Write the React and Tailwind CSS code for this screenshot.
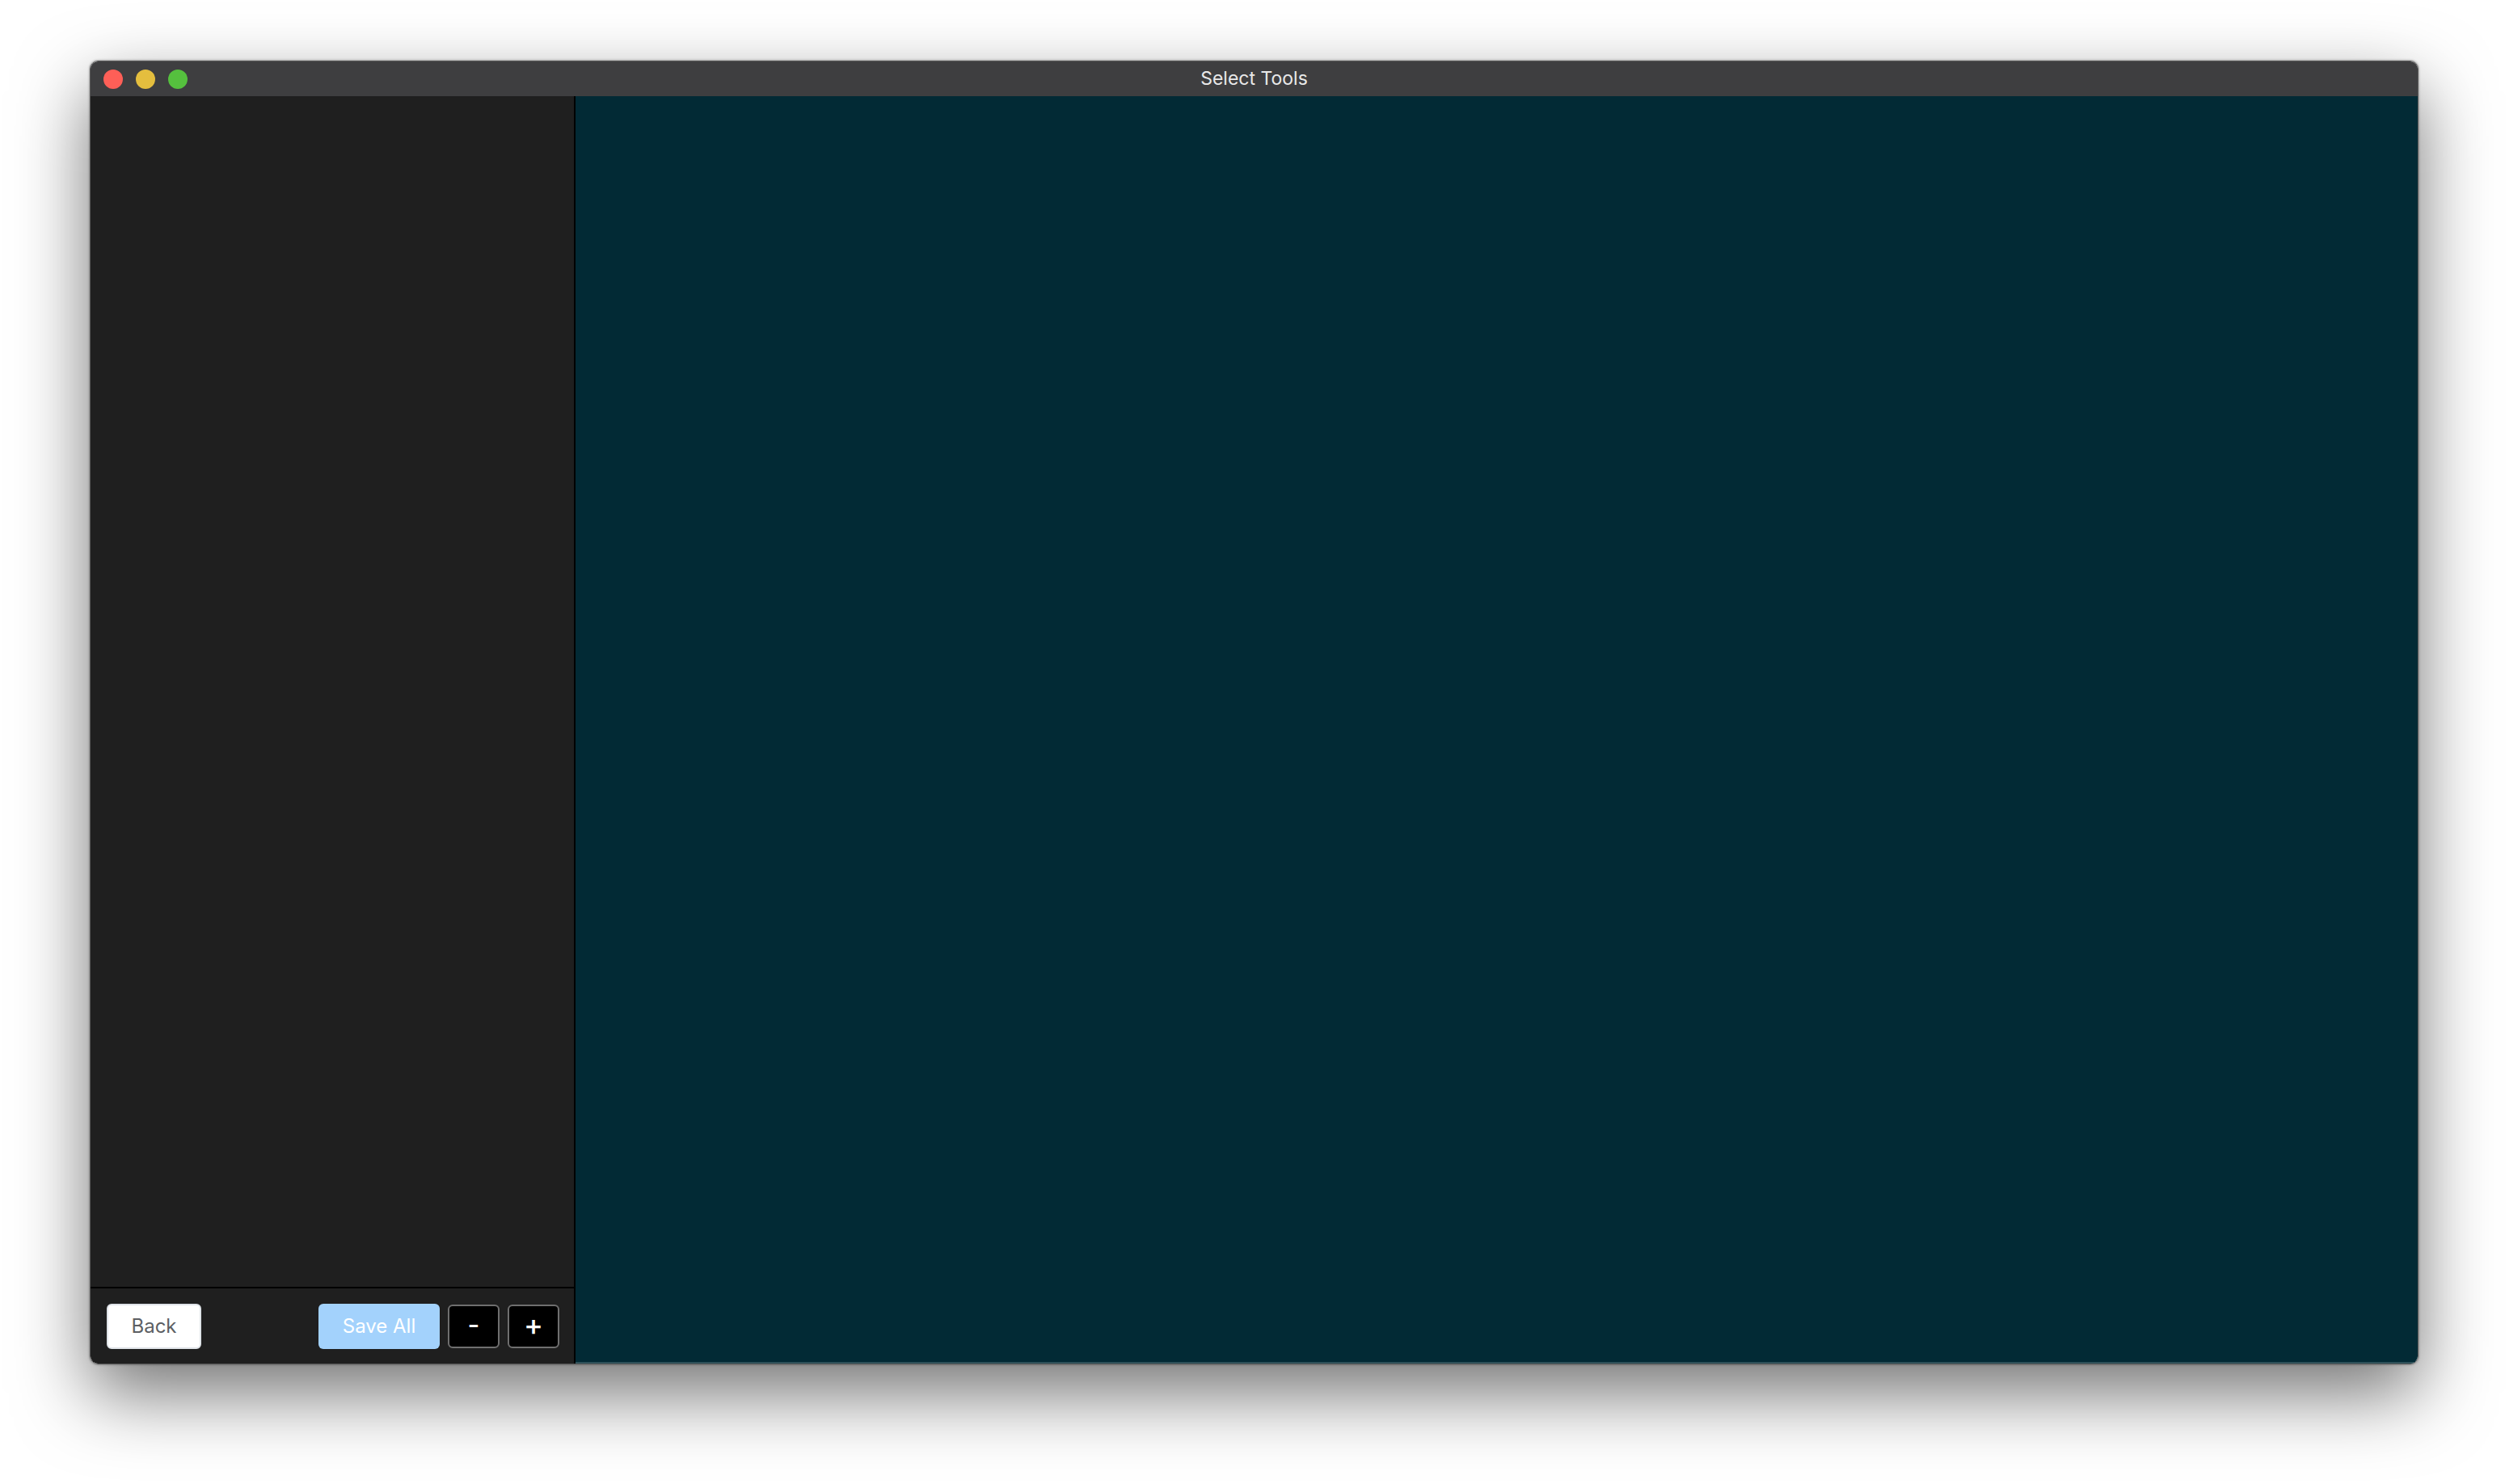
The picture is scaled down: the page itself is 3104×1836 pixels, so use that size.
import React from "react";

const TrafficLights = () => (
  <div className="flex items-center gap-[16px]">
    <span className="block w-[24px] h-[24px] rounded-full bg-[#fe5f57]" />
    <span className="block w-[24px] h-[24px] rounded-full bg-[#e4be3e]" />
    <span className="block w-[24px] h-[24px] rounded-full bg-[#55c03e]" />
  </div>
);

const Footer = () => (
  <div className="h-[95px] shrink-0 border-t-2 border-black flex items-center pl-[20px] pr-[18px]">
    <button className="w-[117px] h-[56px] rounded-[6px] bg-white border-2 border-[#dfe3e8] text-[#5d5f63] text-[24px]">
      Back
    </button>
    <div className="ml-auto flex items-center gap-[10px]">
      <button className="w-[150px] h-[56px] rounded-[6px] bg-[#a3d2fc] text-white text-[24px]">
        Save All
      </button>
      <button className="w-[64px] h-[54px] rounded-[6px] bg-black border-2 border-[#6f6f6f] text-white text-[32px] font-medium leading-none pb-[4px]">
        -
      </button>
      <button className="w-[64px] h-[54px] rounded-[6px] bg-black border-2 border-[#6f6f6f] text-white text-[36px] font-medium leading-none pb-[4px]">
        +
      </button>
    </div>
  </div>
);

export default function App() {
  return (
    <div
      className="w-[3104px] h-[1836px] bg-white pl-[111px] pt-[75px]"
      style={{ fontFamily: "Inter, 'Liberation Sans', sans-serif" }}
    >
      <div className="w-[2881px] h-[1613px] rounded-[10px] border border-[#5a5a5a] overflow-hidden flex flex-col shadow-[0_36px_90px_rgba(0,0,0,0.55),0_0_3px_rgba(0,0,0,0.5)]">
        <div className="h-[43px] shrink-0 bg-[#3e3e40] relative flex items-center pl-[16px]">
          <TrafficLights />
          <div className="absolute inset-0 flex items-center justify-center text-[23px] text-[#e8e8e8] pointer-events-none">
            Select Tools
          </div>
        </div>
        <div className="flex flex-1 min-h-0">
          <aside className="w-[600px] shrink-0 bg-[#1f1f1f] border-r-2 border-black flex flex-col">
            <div className="flex-1" />
            <Footer />
          </aside>
          <main className="flex-1 bg-[#022a35] border-b-2 border-[#2e5159]" />
        </div>
      </div>
    </div>
  );
}
